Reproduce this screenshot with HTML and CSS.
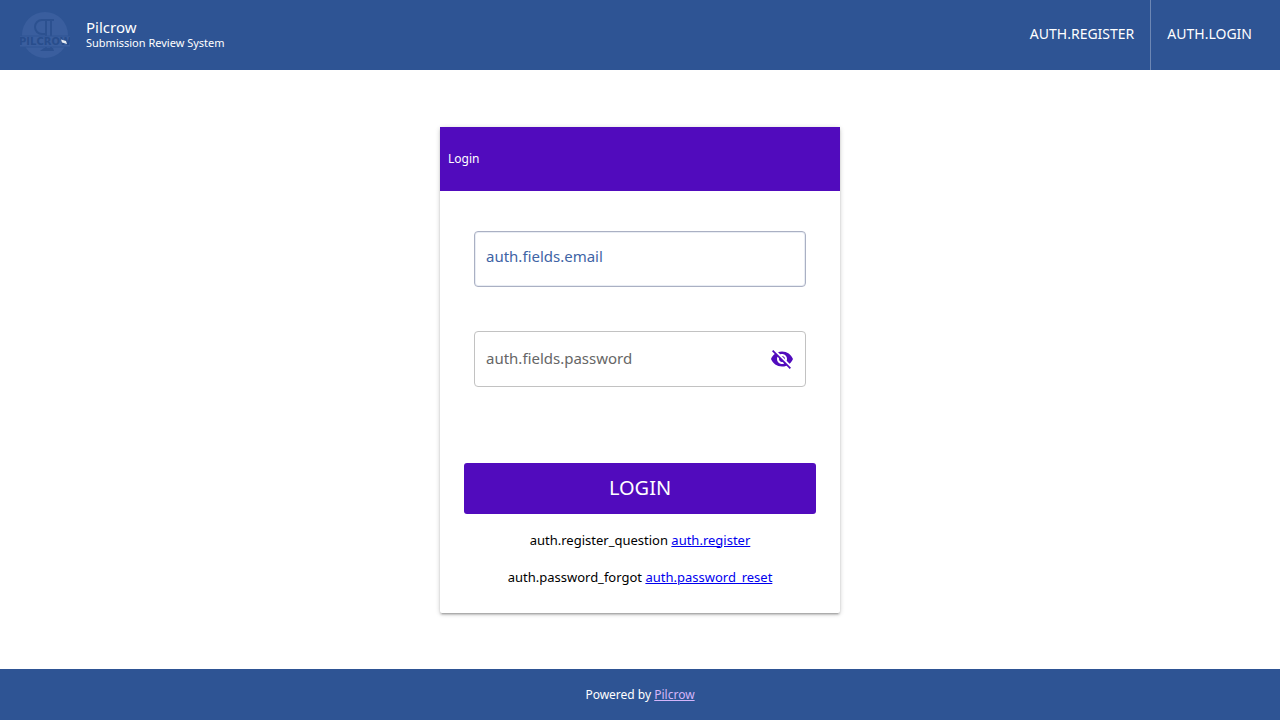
FILE: index.html
```html
<!DOCTYPE html>
<html lang="en">
<head>
  <meta charset="utf-8">
  <meta name="viewport" content="width=device-width, initial-scale=1">
  <title>Login - Pilcrow</title>
  <link rel="stylesheet" href="styles.css">
</head>
<body>
  <header class="site-header">
    <a class="brand" href="#">
      <svg class="brand-logo" viewBox="0 0 50 50" aria-hidden="true">
        <circle cx="25" cy="25" r="23" fill="#3a5e9e"/>
        <path d="M34 10H22a7 7 0 0 0 0 14h4V10M31 10v31M26 24v17" fill="none" stroke="#2c5190" stroke-width="2"/>
        <path d="M20 41l4-3h9l1 3z" fill="#2c5190"/>
        <rect y="26" width="50" height="11" fill="#3a5e9e"/>
        <path d="M0 26h50M0 37h50" stroke="#2e5494" stroke-width="1"/>
        <text class="logo-text" x="25" y="35" text-anchor="middle">PILCROW</text>
        <path d="M41 29.500l5 1.500 1 3-5-1.500z" fill="#e8edf3"/>
      </svg>
      <span class="brand-text">
        <span class="brand-name">Pilcrow</span>
        <span class="brand-tagline">Submission Review System</span>
      </span>
    </a>
    <nav class="site-nav">
      <a class="nav-link" href="#">AUTH.REGISTER</a>
      <a class="nav-link" href="#">AUTH.LOGIN</a>
    </nav>
  </header>

  <main class="page">
    <form class="card">
      <h1 class="card-title">Login</h1>
      <div class="fields">
        <div class="field field-focused">
          <label class="field-label" for="email">auth.fields.email</label>
          <input class="field-input" id="email" type="email" autocomplete="username">
        </div>
        <div class="field">
          <label class="field-label" for="password">auth.fields.password</label>
          <input class="field-input" id="password" type="password" autocomplete="current-password">
          <button class="reveal" type="button" aria-label="Show password">
            <svg viewBox="0 0 24 24" aria-hidden="true"><path fill="currentColor" d="M12 7c2.760 0 5 2.240 5 5 0 .65-.13 1.260-.36 1.830l2.920 2.920c1.510-1.260 2.700-2.890 3.430-4.750-1.730-4.390-6-7.500-11-7.500-1.400 0-2.740.25-3.980.7l2.160 2.160C10.740 7.130 11.350 7 12 7zM2 4.270l2.280 2.280.46.46C3.080 8.300 1.780 10.020 1 12c1.730 4.390 6 7.500 11 7.500 1.550 0 3.030-.3 4.380-.84l.42.42L19.730 22 21 20.730 3.270 3 2 4.270zM7.530 9.800l1.550 1.550c-.05.21-.08.43-.08.65 0 1.660 1.340 3 3 3 .22 0 .44-.03.65-.08l1.550 1.550c-.67.33-1.410.53-2.200.53-2.760 0-5-2.240-5-5 0-.79.2-1.530.53-2.200zm4.310-.78l3.150 3.150.02-.16c0-1.660-1.340-3-3-3l-.17.01z"/></svg>
          </button>
        </div>
      </div>
      <div class="actions">
        <button class="submit" type="submit">LOGIN</button>
        <p class="hint">auth.register_question <a href="#">auth.register</a></p>
        <p class="hint">auth.password_forgot <a href="#">auth.password_reset</a></p>
      </div>
    </form>
  </main>

  <footer class="site-footer">Powered by&nbsp;<a href="#">Pilcrow</a></footer>
</body>
</html>
```

FILE: styles.css
```css
* {
  box-sizing: border-box;
}

body {
  display: flex;
  flex-direction: column;
  min-height: 100vh;
  margin: 0;
  background: #fff;
  color: #000;
  font-family: "Noto Sans", "Liberation Sans", sans-serif;
  font-size: 13px;
  line-height: 20px;
}

.site-header {
  display: flex;
  justify-content: space-between;
  min-height: 70px;
  padding: 0 12px 0 20px;
  background: #2e5494;
  color: #fff;
}

.brand {
  display: flex;
  align-items: center;
  gap: 16px;
  color: inherit;
  text-decoration: none;
}

.brand-logo {
  width: 50px;
  height: 50px;
}

.logo-text {
  fill: #284d8c;
  font-family: "DejaVu Sans", sans-serif;
  font-size: 10px;
  font-weight: 700;
}

.brand-text {
  display: flex;
  flex-direction: column;
  padding-bottom: 3px;
}

.brand-name {
  font-size: 15px;
  line-height: 18px;
}

.brand-tagline {
  font-size: 11px;
  line-height: 14px;
}

.site-nav {
  display: flex;
}

.nav-link {
  display: flex;
  align-items: center;
  padding: 0 16px 2px;
  color: inherit;
  font-size: 14px;
  text-decoration: none;
}

.nav-link + .nav-link {
  border-left: 1px solid #6d87b4;
}

.page {
  display: flex;
  flex: 1;
  align-items: center;
  justify-content: center;
  padding: 24px;
}

.card {
  width: 100%;
  max-width: 400px;
  border-radius: 2px;
  background: #fff;
  box-shadow: 0 1px 5px rgba(0, 0, 0, 0.2), 0 2px 2px rgba(0, 0, 0, 0.14), 0 3px 1px -2px rgba(0, 0, 0, 0.12);
}

.card-title {
  margin: 0;
  padding: 22px 8px;
  background: #510bbd;
  color: #fff;
  font-size: 12px;
  font-weight: 400;
  line-height: 20px;
}

.fields {
  display: grid;
  gap: 44px;
  padding: 40px 34px 76px;
}

.field {
  display: grid;
  grid-template-columns: 1fr 48px;
  align-items: center;
  font-size: 15px;
}

.field-label {
  z-index: 1;
  grid-area: 1 / 1;
  padding: 0 0 2px 12px;
  color: #666;
  pointer-events: none;
}

.field-input {
  grid-area: 1 / 1 / 2 / 3;
  width: 100%;
  height: 56px;
  padding: 0 48px 0 12px;
  border: 1px solid #c2c2c2;
  border-radius: 4px;
  background: #fff;
  font: inherit;
}

.field-focused .field-label {
  padding-bottom: 6px;
  color: #4064a5;
}

.field-focused .field-input {
  border-color: #aab0c3;
  box-shadow: inset 0 0 0 1px #e9edf4;
}

.reveal {
  z-index: 1;
  grid-area: 1 / 2;
  justify-self: center;
  width: 24px;
  height: 24px;
  padding: 0;
  border: 0;
  background: none;
  color: #510bbd;
  cursor: pointer;
}

.reveal svg {
  display: block;
}

.actions {
  padding: 0 24px 26px;
  text-align: center;
}

.submit {
  display: block;
  width: 100%;
  height: 51px;
  margin-bottom: 16px;
  border: 0;
  border-radius: 3px;
  background: #510bbd;
  color: #fff;
  font: inherit;
  font-size: 20px;
  cursor: pointer;
}

.hint {
  margin: 0;
}

.hint + .hint {
  margin-top: 17px;
}

.hint a {
  color: #00e;
}

.site-footer {
  display: flex;
  align-items: center;
  justify-content: center;
  min-height: 51px;
  background: #2e5494;
  color: #fff;
  font-size: 12px;
}

.site-footer a {
  color: #d4b5fa;
}
```
